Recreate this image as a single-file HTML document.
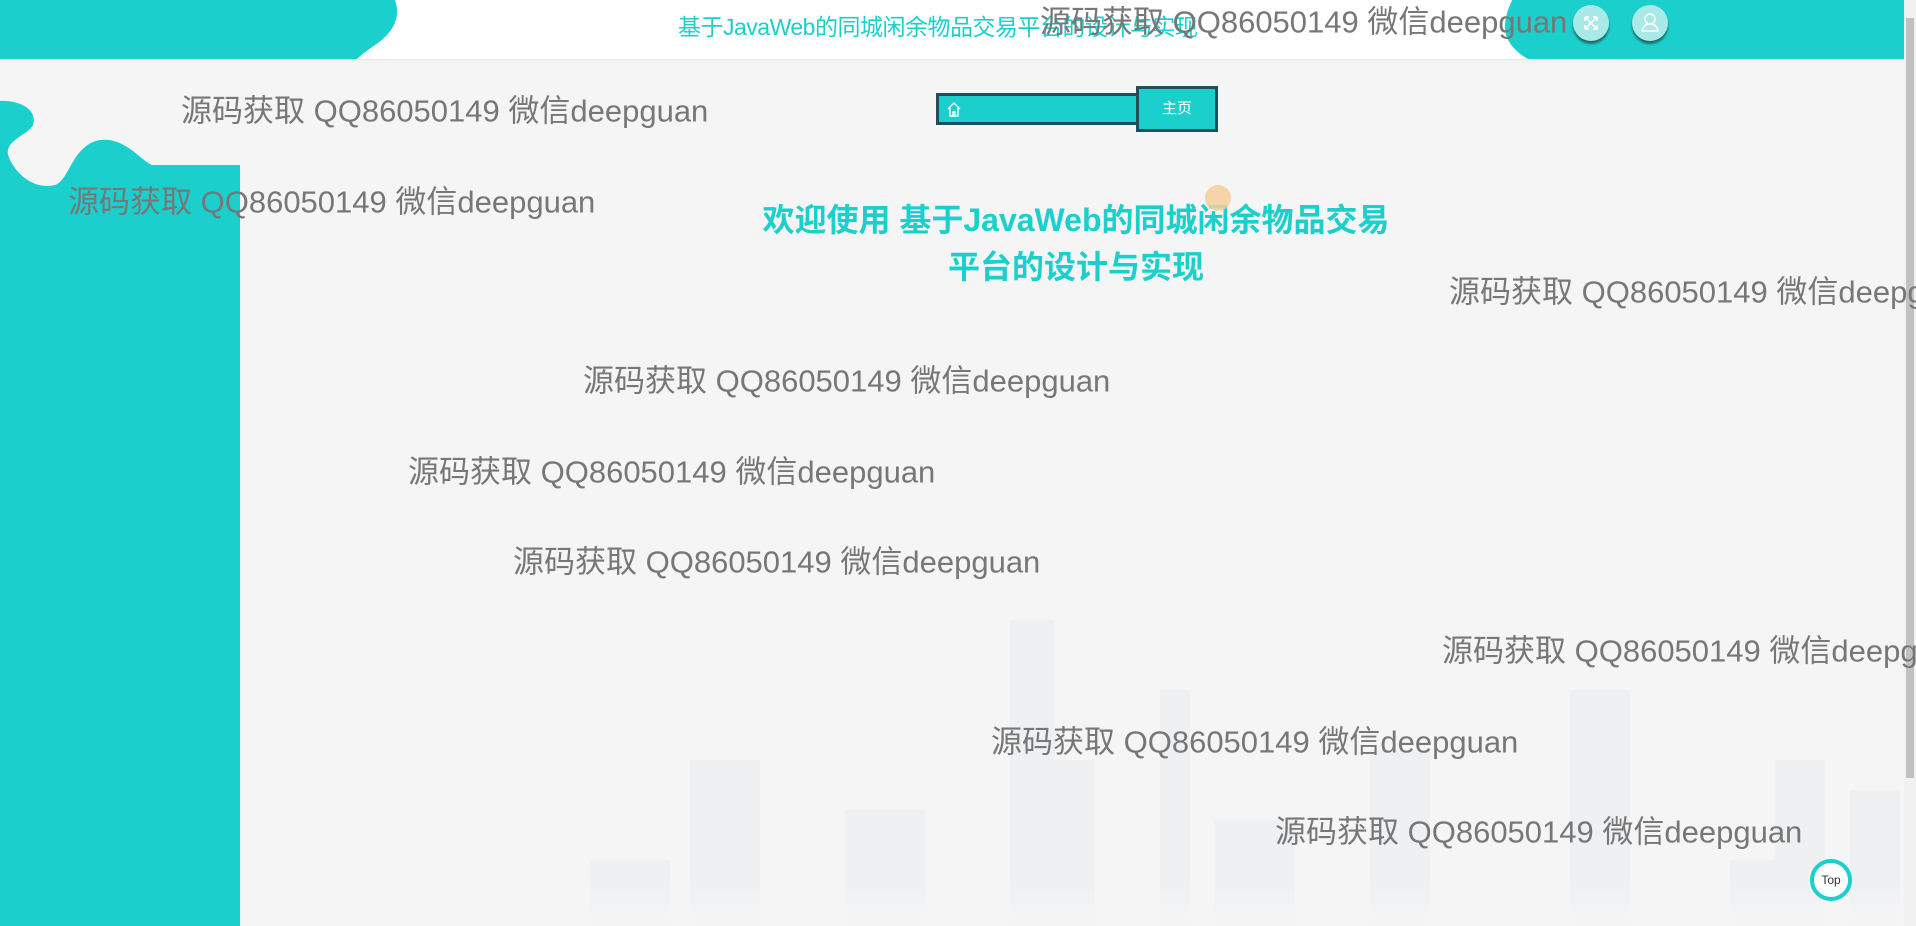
<!DOCTYPE html>
<html><head><meta charset="utf-8"><style>
*{margin:0;padding:0;box-sizing:border-box}
body{width:1916px;height:926px;overflow:hidden;background:#f5f5f5;position:relative;font-family:"Liberation Sans","Noto Sans CJK SC",sans-serif}
.hdr{position:absolute;left:0;top:0;width:1904px;height:59px;background:#fff;box-shadow:0 1px 3px rgba(0,0,0,.06)}
.wm{position:absolute;font-size:31px;color:#777;white-space:nowrap;line-height:1;transform:translateY(-50%);z-index:5}
.sb{position:absolute;right:0;top:0;width:12px;height:926px;background:#f1f1f1}
.sb i{position:absolute;left:2px;top:18px;width:8px;height:760px;background:#c1c1c1}
.circ{position:absolute;width:36px;height:36px;border-radius:50%;background:#a9e9e8;box-shadow:0 3px 2px #1a6d6b;top:5px}
.sky{position:absolute;background:#e3e8ee}
</style></head><body>
<div class="hdr"></div>
<div style="position:absolute;left:560px;top:560px;width:1340px;height:366px;opacity:.35">
<div class="sky" style="left:450px;top:60px;width:45px;height:306px"></div>
<div class="sky" style="left:600px;top:130px;width:30px;height:236px"></div>
<div class="sky" style="left:130px;top:200px;width:70px;height:166px"></div>
<div class="sky" style="left:285px;top:250px;width:80px;height:116px"></div>
<div class="sky" style="left:495px;top:200px;width:40px;height:166px"></div>
<div class="sky" style="left:655px;top:260px;width:80px;height:106px"></div>
<div class="sky" style="left:810px;top:190px;width:60px;height:176px"></div>
<div class="sky" style="left:1010px;top:130px;width:60px;height:236px"></div>
<div class="sky" style="left:1215px;top:200px;width:50px;height:166px"></div>
<div class="sky" style="left:1290px;top:230px;width:50px;height:136px"></div>
<div class="sky" style="left:1170px;top:300px;width:75px;height:66px"></div>
<div class="sky" style="left:30px;top:300px;width:80px;height:66px"></div>
</div>
<div style="position:absolute;left:240px;top:880px;width:1664px;height:46px;background:linear-gradient(rgba(245,245,245,0),#f5f5f5)"></div>
<svg style="position:absolute;left:0;top:0" width="1916" height="926">
<path d="M0 0H395C402 20 390 35 375 45C365 52 360 56 357 59H0Z" fill="#1bcfcc"/>
<path d="M1512 0H1904V59H1528C1515 52 1505 40 1505 28C1505 14 1510 6 1512 0Z" fill="#1bcfcc"/>
<path d="M0 101C20 100 38 110 33 125C28 135 5 140 8 155C15 175 35 190 55 185C70 180 72 145 100 140C125 137 140 160 152 165H240V926H0Z" fill="#1bcfcc"/>
</svg>
<div style="position:absolute;left:678px;top:8px;font-size:23px;color:#1bcfcc;white-space:nowrap;letter-spacing:-0.5px">基于JavaWeb的同城闲余物品交易平台的设计与实现</div>
<div class="circ" style="left:1573px"><svg width="36" height="36"><path d="M12 12L24 24M24 12L12 24M12 12h4M12 12v4M24 24h-4M24 24v-4M24 12h-4M24 12v4M12 24h4M12 24v-4" stroke="#fff" stroke-width="1.5" fill="none"/></svg></div>
<div class="circ" style="left:1632px"><svg width="36" height="36"><circle cx="18" cy="14" r="5" stroke="#fff" stroke-width="1.5" fill="none"/><path d="M10 26c1-5 4-7 8-7s7 2 8 7z" stroke="#fff" stroke-width="1.5" fill="none"/></svg></div>
<div style="position:absolute;left:936px;top:93px;width:205px;height:32px;background:#1bcfcc;border:3px solid #1f4f5a;border-right:none"></div>
<svg style="position:absolute;left:946px;top:100px" width="16" height="18"><path d="M2 9L8 3L14 9M4 8V16H12V8M7 16V12H9V16" stroke="#fff" stroke-width="1.4" fill="none"/></svg>
<div style="position:absolute;left:1136px;top:86px;width:82px;height:46px;background:#1bcfcc;border:3px solid #1f4f5a;color:#fff;font-size:15px;text-align:center;line-height:40px">主页</div>
<div style="position:absolute;left:730px;top:197px;width:692px;text-align:center;font-size:32px;font-weight:bold;color:#1bcfcc;line-height:47px">欢迎使用 基于JavaWeb的同城闲余物品交易<br>平台的设计与实现</div>
<div style="position:absolute;left:1205px;top:185px;width:26px;height:26px;border-radius:50%;background:#f2cf9a;opacity:.85"></div>
<div class="wm" style="left:1040px;top:22px">源码获取 QQ86050149 微信deepguan</div>
<div class="wm" style="left:181px;top:111px">源码获取 QQ86050149 微信deepguan</div>
<div class="wm" style="left:68px;top:202px">源码获取 QQ86050149 微信deepguan</div>
<div class="wm" style="left:1449px;top:292px">源码获取 QQ86050149 微信deepguan</div>
<div class="wm" style="left:583px;top:381px">源码获取 QQ86050149 微信deepguan</div>
<div class="wm" style="left:408px;top:472px">源码获取 QQ86050149 微信deepguan</div>
<div class="wm" style="left:513px;top:562px">源码获取 QQ86050149 微信deepguan</div>
<div class="wm" style="left:1442px;top:651px">源码获取 QQ86050149 微信deepguan</div>
<div class="wm" style="left:991px;top:742px">源码获取 QQ86050149 微信deepguan</div>
<div class="wm" style="left:1275px;top:832px">源码获取 QQ86050149 微信deepguan</div>
<div style="position:absolute;left:1810px;top:859px;width:42px;height:42px;border-radius:50%;border:4px solid #1bcfcc;background:#fff;font-size:12px;color:#333;text-align:center;line-height:34px">Top</div>
<div class="sb"><i></i></div>
</body></html>
